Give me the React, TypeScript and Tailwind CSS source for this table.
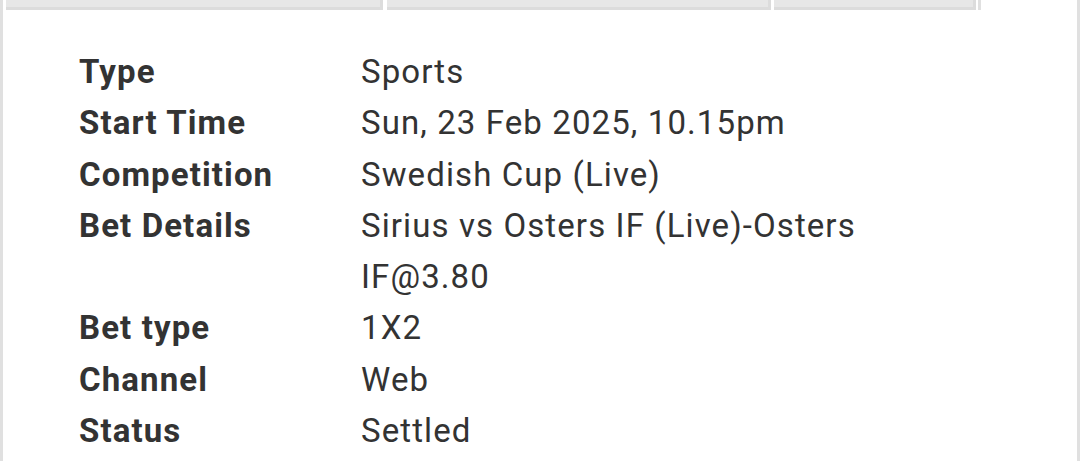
import React from 'react'

const rows: { label: string; value: string }[] = [
  { label: 'Type', value: 'Sports' },
  { label: 'Start Time', value: 'Sun, 23 Feb 2025, 10.15pm' },
  { label: 'Competition', value: 'Swedish Cup (Live)' },
  { label: 'Bet Details', value: 'Sirius vs Osters IF (Live)-Osters IF@3.80' },
  { label: 'Bet type', value: '1X2' },
  { label: 'Channel', value: 'Web' },
  { label: 'Status', value: 'Settled' },
]

const TabStub: React.FC<{ width: string }> = ({ width }) => (
  <div
    className={`${width} h-[10px] bg-[#e7e7e7] border-b-[3px] border-r-[3px] border-[#dcdcdc] shrink-0`}
  />
)

const App: React.FC = () => {
  return (
    <div className="w-[1080px] h-[461px] overflow-hidden bg-white flex font-['Roboto',sans-serif] text-[#333]">
      <div className="w-[3px] h-full bg-[#e0e0e0] shrink-0" />
      <div className="flex-1 flex flex-col">
        {/* tab strip cut off at top */}
        <div className="flex items-start pl-[3px]">
          <TabStub width="w-[377px]" />
          <div className="w-[4px]" />
          <TabStub width="w-[384px]" />
          <div className="w-[3px]" />
          <TabStub width="w-[202px]" />
          <div className="w-[3px] h-[10px] bg-[#e0e0e0] ml-[2px]" />
        </div>

        <div className="pl-[76px] pt-[36px]">
          {rows.map((row) => (
            <div
              key={row.label}
              className="flex text-[33px] leading-[51.3px] tracking-[1.1px]"
            >
              <div className="w-[282px] shrink-0 font-bold">{row.label}</div>
              <div className="w-[560px]">{row.value}</div>
            </div>
          ))}
        </div>
      </div>
      <div className="w-[3px] h-full bg-[#e0e0e0] shrink-0" />
    </div>
  )
}

export default App
